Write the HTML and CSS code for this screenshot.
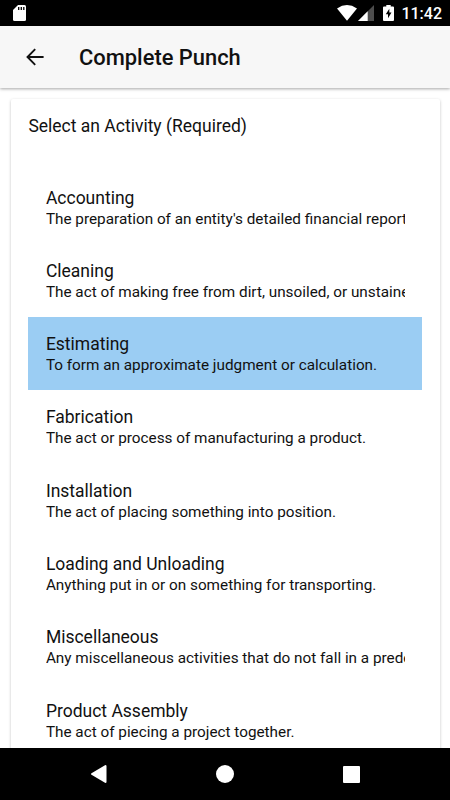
FILE: index.html
```html
<!DOCTYPE html>
<html lang="en">
<head>
    <meta charset="UTF-8">
    <meta name="viewport" content="width=device-width, initial-scale=1.0">
    <title>Complete Punch</title>
    <link rel="stylesheet" href="styles.css">
</head>
<body>
    <div class="status-bar">
        <svg class="sd-icon" width="13" height="16" viewBox="0 0 13 16">
            <path fill="#fff" d="M5 0h6.500a1.500 1.500 0 0 1 1.500 1.500v13a1.500 1.500 0 0 1-1.500 1.500h-10A1.500 1.500 0 0 1 0 14.500V5z"/>
            <path stroke="#000" stroke-width="1.300" d="M5.700 2v3M8.300 2v3M10.800 2v3"/>
        </svg>
        <div class="status-icons">
            <svg class="wifi-icon" width="20" height="16" viewBox="0 0 20 16">
                <path fill="#fff" d="M0 3.500Q10-3.300 20 3.500L10 15.700z"/>
            </svg>
            <svg class="signal-icon" width="16" height="16" viewBox="0 0 16 16">
                <path fill="#4d4d4d" d="M0 16L16 0v16z"/>
                <path fill="#fff" d="M0 16L9.700 6.300V16z"/>
            </svg>
            <svg class="battery-icon" width="11" height="16" viewBox="0 0 11 16">
                <path fill="#fff" d="M3.300 0h4.400v1.500H10a1 1 0 0 1 1 1V15a1 1 0 0 1-1 1H1a1 1 0 0 1-1-1V2.500a1 1 0 0 1 1-1h2.300z"/>
                <path fill="#000" d="M6.300 3.700L2.800 9.300h2.200v4l3.500-5.800H6.300z"/>
            </svg>
            <span class="clock">11:42</span>
        </div>
    </div>

    <div class="header">
        <svg class="back" width="18" height="18" viewBox="0 0 18 18">
            <path fill="none" stroke="#111" stroke-width="1.900" d="M17.600 9H1.900M9.200 1.200L1.500 9L9.200 16.800"/>
        </svg>
        <h1>Complete Punch</h1>
    </div>

    <div class="content">
        <div class="card">
            <h2>Select an Activity (Required)</h2>
            <ul class="activity-list">
                <li>
                    <h3>Accounting</h3>
                    <p>The preparation of an entity's detailed financial reports.</p>
                </li>
                <li>
                    <h3>Cleaning</h3>
                    <p>The act of making free from dirt, unsoiled, or unstained.</p>
                </li>
                <li class="selected">
                    <h3>Estimating</h3>
                    <p>To form an approximate judgment or calculation.</p>
                </li>
                <li>
                    <h3>Fabrication</h3>
                    <p>The act or process of manufacturing a product.</p>
                </li>
                <li>
                    <h3>Installation</h3>
                    <p>The act of placing something into position.</p>
                </li>
                <li>
                    <h3>Loading and Unloading</h3>
                    <p>Anything put in or on something for transporting.</p>
                </li>
                <li>
                    <h3>Miscellaneous</h3>
                    <p>Any miscellaneous activities that do not fall in a predefined activity.</p>
                </li>
                <li>
                    <h3>Product Assembly</h3>
                    <p>The act of piecing a project together.</p>
                </li>
            </ul>
        </div>
    </div>

    <div class="nav-bar">
        <svg width="17" height="20" viewBox="0 0 17 20">
            <path fill="#fff" stroke="#fff" stroke-width="2" stroke-linejoin="round" d="M2 10L15.500 2v16z"/>
        </svg>
        <svg width="18" height="18" viewBox="0 0 18 18">
            <circle cx="9" cy="9" r="9" fill="#fff"/>
        </svg>
        <svg width="17" height="17" viewBox="0 0 17 17">
            <rect width="17" height="17" rx="1" fill="#fff"/>
        </svg>
    </div>
</body>
</html>
```

FILE: styles.css
```css
* {
    box-sizing: border-box;
}

body {
    font-family: Roboto, sans-serif;
    background: #fff;
    color: #111;
    margin: 0;
    height: 100vh;
    display: flex;
    flex-direction: column;
    overflow: hidden;
}

h1, h2, h3, p, ul {
    margin: 0;
    padding: 0;
    font-weight: 400;
}

.status-bar {
    display: flex;
    justify-content: space-between;
    align-items: flex-start;
    height: 26px;
    padding: 5px 8px 0 13px;
    background: #000;
    flex-shrink: 0;
}

.status-icons {
    display: flex;
    color: #fff;
}

.signal-icon {
    margin-left: 1px;
}

.battery-icon {
    margin-left: 9px;
}

.clock {
    margin-left: 7px;
    font-size: 16px;
    font-weight: 500;
    line-height: 18px;
}

.header {
    display: flex;
    align-items: center;
    height: 62px;
    padding-left: 26px;
    background: #f7f7f7;
    box-shadow: 0 1px 3px rgba(0, 0, 0, 0.35);
    flex-shrink: 0;
}

.header h1 {
    margin-left: 35px;
    font-size: 21.900px;
    font-weight: 500;
}

.content {
    flex: 1;
    min-height: 0;
    overflow: hidden;
    padding: 11px 10px 0 11px;
}

.card {
    height: 720px;
    padding: 17px 18px 0 17.400px;
    border-radius: 2px;
    box-shadow: 0 1px 3px rgba(0, 0, 0, 0.25);
}

.card h2 {
    font-size: 17.500px;
    line-height: 20px;
}

.activity-list {
    margin-top: 34.600px;
    list-style: none;
}

.activity-list li {
    height: 73.300px;
    padding: 17px 17.500px 0;
}

.activity-list .selected {
    background: #9bcdf3;
}

.activity-list h3 {
    font-size: 17.500px;
    line-height: 21px;
}

.activity-list p {
    font-size: 15.300px;
    line-height: 20px;
    white-space: nowrap;
    overflow: hidden;
}

.nav-bar {
    display: flex;
    justify-content: space-between;
    align-items: center;
    height: 52px;
    padding: 0 90px;
    background: #000;
    flex-shrink: 0;
}
```
